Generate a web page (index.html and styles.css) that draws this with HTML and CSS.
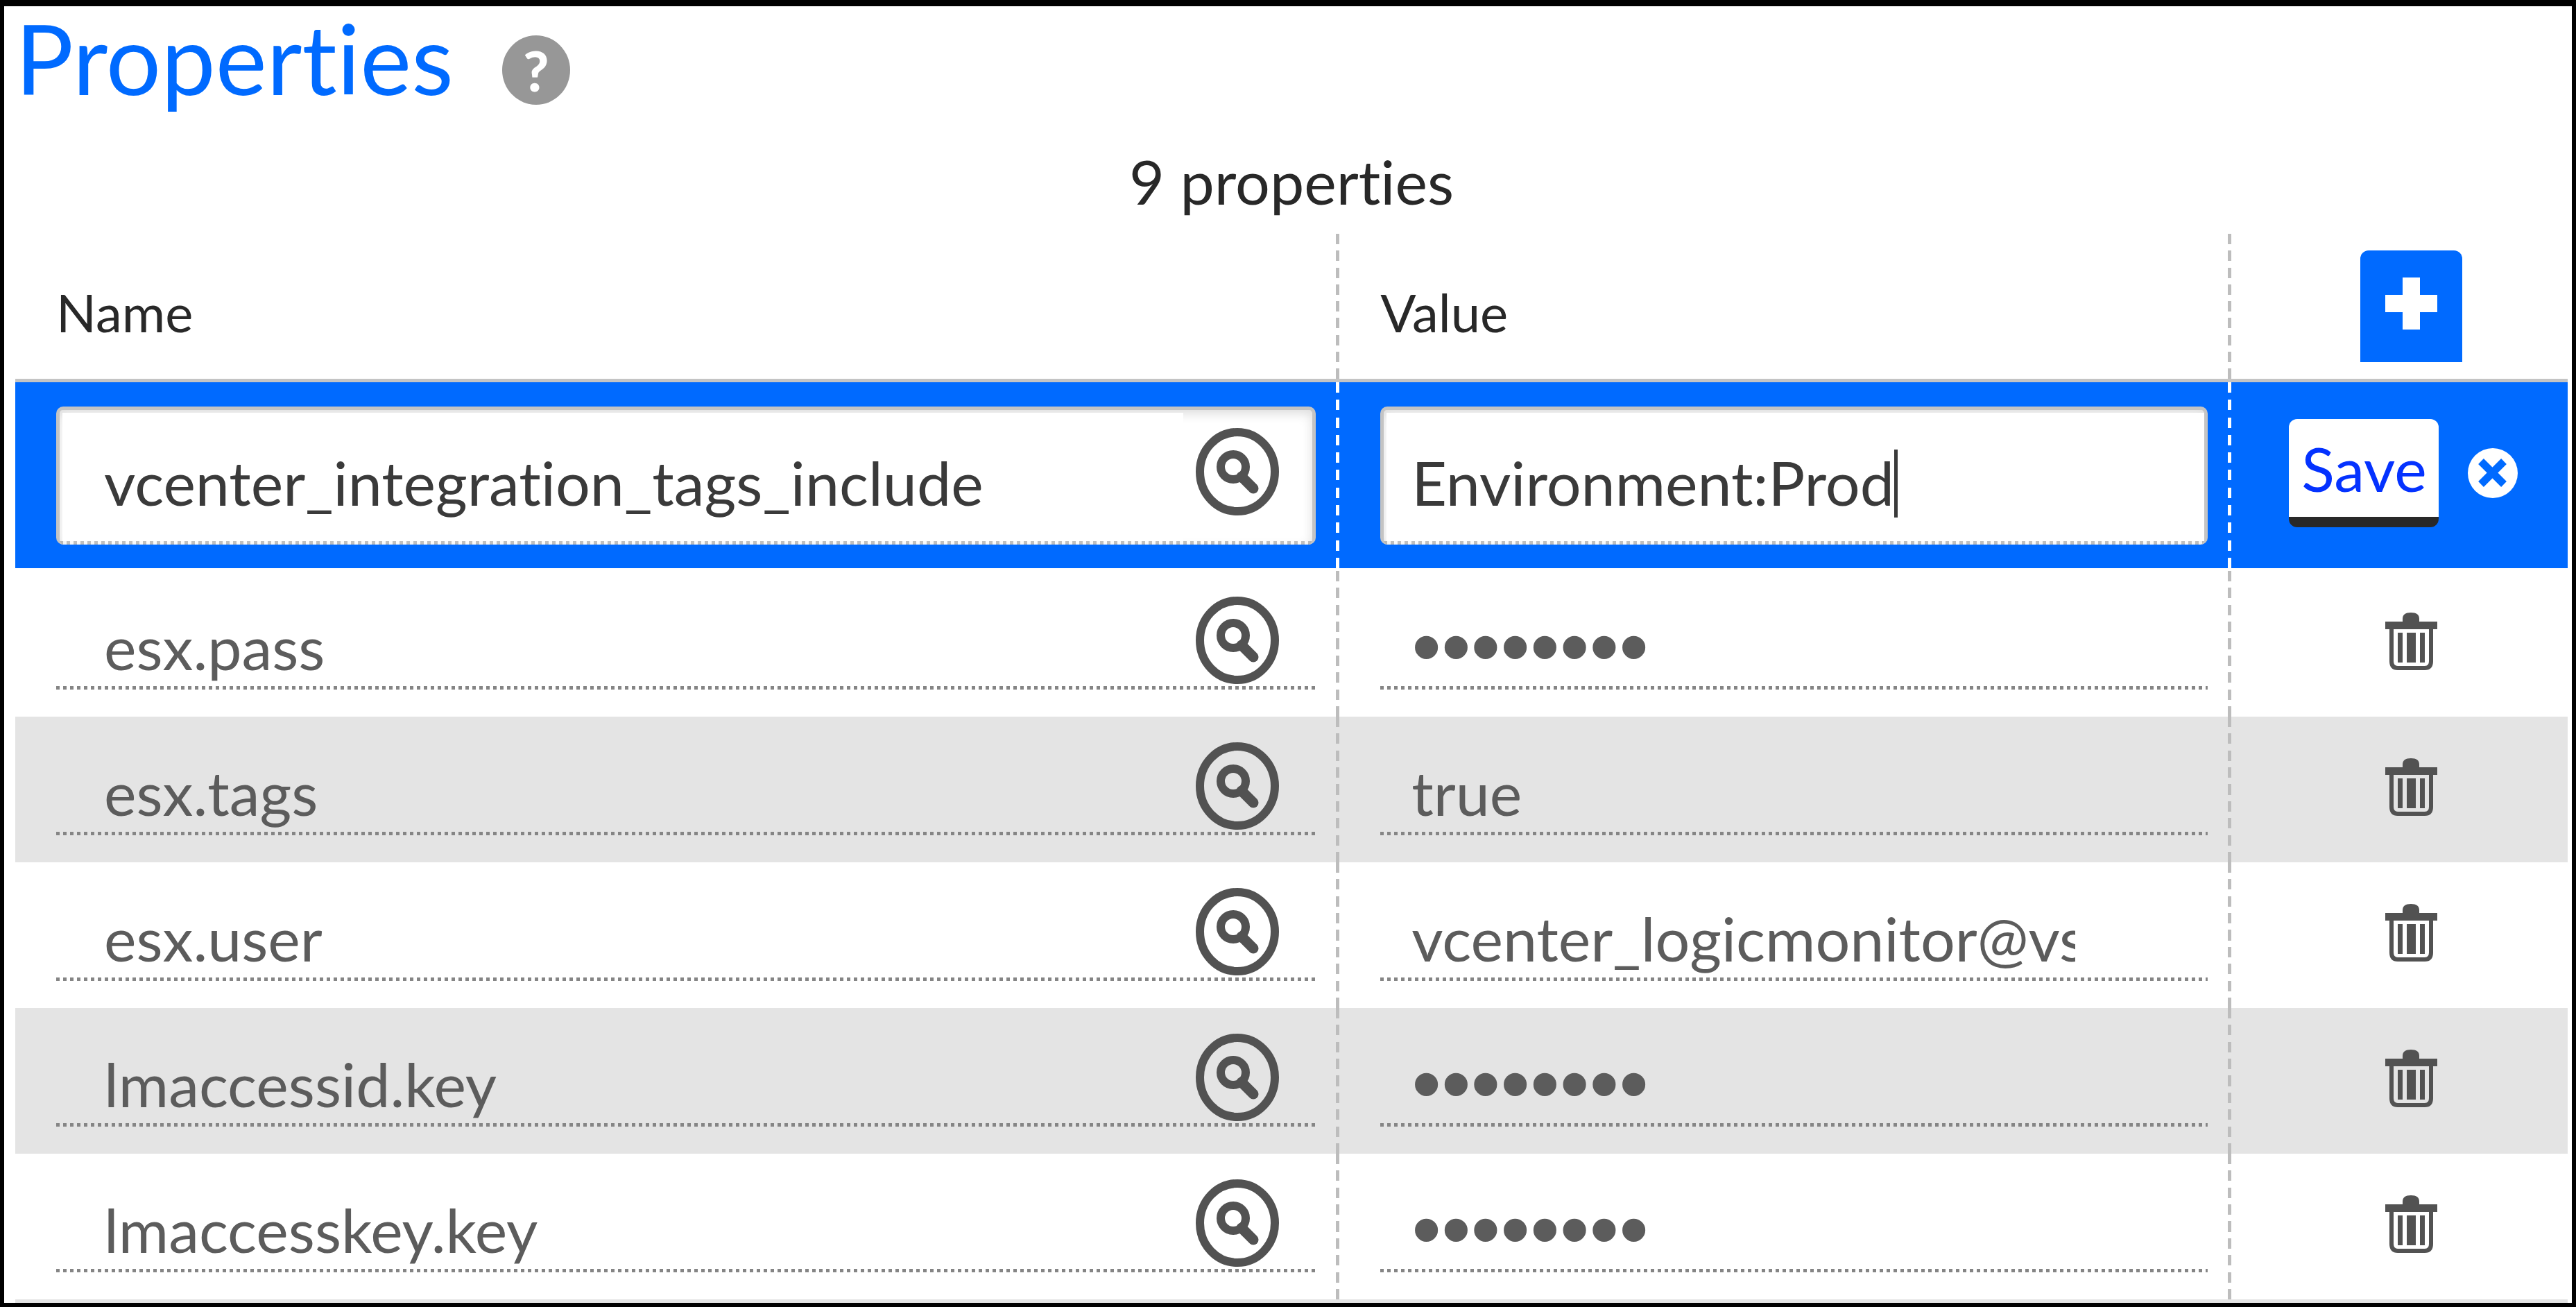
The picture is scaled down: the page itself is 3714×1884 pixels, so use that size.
FILE: index.html
```html
<!DOCTYPE html>
<html lang="en">
<head>
<meta charset="utf-8">
<title>Properties</title>
<link rel="stylesheet" href="styles.css">
</head>
<body>
<svg class="sprite" aria-hidden="true">
  <symbol id="search" viewBox="0 0 120 126">
    <ellipse cx="60" cy="63" rx="54" ry="57" fill="none" stroke="currentColor" stroke-width="12"/>
    <circle cx="54" cy="56" r="18" fill="none" stroke="currentColor" stroke-width="12"/>
    <path d="M66 70 83 87" stroke="currentColor" stroke-width="15" stroke-linecap="round"/>
  </symbol>
  <symbol id="trash" viewBox="0 0 75 83">
    <path d="M25 13V9q0-9 12-9t12 9v4h26v11H0V13z" fill="currentColor"/>
    <path d="M9 22V70q0 10 9 10H57q9 0 9-10V22" fill="none" stroke="currentColor" stroke-width="6"/>
    <path d="M18 29h7v43h-7zM31 29h13v43H31zM50 29h7v43h-7z" fill="currentColor"/>
  </symbol>
</svg>
<main class="panel">
  <header class="panel-head">
    <h1 class="title">Properties</h1>
    <button class="help" type="button" aria-label="Help">?</button>
  </header>
  <p class="count">9 properties</p>
  <table class="props">
    <colgroup><col class="col-name"><col class="col-value"><col class="col-action"></colgroup>
    <thead>
      <tr>
        <th scope="col">Name</th>
        <th scope="col">Value</th>
        <th scope="col" class="action">
          <button class="add" type="button" aria-label="Add property"><svg width="75" height="75" viewBox="0 0 75 75"><path d="M25 0h25v25h25v25H50v25H25V50H0V25h25z" fill="#fff"/></svg></button>
        </th>
      </tr>
    </thead>
    <tbody>
      <tr class="editing">
        <td><div class="field"><input type="text" aria-label="Name" value="vcenter_integration_tags_include"><button class="search" type="button" aria-label="Search"><svg width="120" height="126"><use href="#search"/></svg></button></div></td>
        <td><div class="field value"><input type="text" aria-label="Value" value="Environment:Prod"><span class="caret"></span></div></td>
        <td class="action">
          <div class="actions">
            <button class="save" type="button">Save</button>
            <button class="cancel" type="button" aria-label="Cancel"><svg width="72" height="72" viewBox="0 0 72 72"><circle cx="36" cy="36" r="36" fill="#fff"/><path d="M19 19 52 52M52 19 19 52" stroke="#006aff" stroke-width="11"/></svg></button>
          </div>
        </td>
      </tr>
      <tr class="first">
        <td><div class="field"><input type="text" aria-label="Name" value="esx.pass"><button class="search" type="button" aria-label="Search"><svg width="120" height="126"><use href="#search"/></svg></button></div></td>
        <td><div class="field value"><input type="password" aria-label="Value" value="password"></div></td>
        <td class="action"><button class="delete" type="button" aria-label="Delete"><svg width="75" height="83"><use href="#trash"/></svg></button></td>
      </tr>
      <tr class="shaded">
        <td><div class="field"><input type="text" aria-label="Name" value="esx.tags"><button class="search" type="button" aria-label="Search"><svg width="120" height="126"><use href="#search"/></svg></button></div></td>
        <td><div class="field value"><input type="text" aria-label="Value" value="true"></div></td>
        <td class="action"><button class="delete" type="button" aria-label="Delete"><svg width="75" height="83"><use href="#trash"/></svg></button></td>
      </tr>
      <tr>
        <td><div class="field"><input type="text" aria-label="Name" value="esx.user"><button class="search" type="button" aria-label="Search"><svg width="120" height="126"><use href="#search"/></svg></button></div></td>
        <td><div class="field value"><input type="text" aria-label="Value" value="vcenter_logicmonitor@vsphere.local"></div></td>
        <td class="action"><button class="delete" type="button" aria-label="Delete"><svg width="75" height="83"><use href="#trash"/></svg></button></td>
      </tr>
      <tr class="shaded">
        <td><div class="field"><input type="text" aria-label="Name" value="lmaccessid.key"><button class="search" type="button" aria-label="Search"><svg width="120" height="126"><use href="#search"/></svg></button></div></td>
        <td><div class="field value"><input type="password" aria-label="Value" value="password"></div></td>
        <td class="action"><button class="delete" type="button" aria-label="Delete"><svg width="75" height="83"><use href="#trash"/></svg></button></td>
      </tr>
      <tr>
        <td><div class="field"><input type="text" aria-label="Name" value="lmaccesskey.key"><button class="search" type="button" aria-label="Search"><svg width="120" height="126"><use href="#search"/></svg></button></div></td>
        <td><div class="field value"><input type="password" aria-label="Value" value="password"></div></td>
        <td class="action"><button class="delete" type="button" aria-label="Delete"><svg width="75" height="83"><use href="#trash"/></svg></button></td>
      </tr>
    </tbody>
  </table>
  <div class="more"></div>
</main>
</body>
</html>
```
FILE: styles.css
```css
* { box-sizing: border-box; }

body {
  margin: 0;
  background: #fff;
  color: #282828;
  font-family: Lato, "Liberation Sans", sans-serif;
  font-size: 88px;
  font-variant-ligatures: none;
}

button, input {
  margin: 0;
  padding: 0;
  border: 0;
  background: none;
  color: inherit;
  font: inherit;
  font-variant-ligatures: none;
}

svg { display: block; }

.sprite {
  position: absolute;
  width: 0;
  height: 0;
}

.panel {
  min-height: 100vh;
  padding: 0 6px 0 16px;
  border: 6px solid #000;
  border-top-width: 9px;
}

.panel-head {
  display: flex;
  align-items: center;
  gap: 70px;
  height: 184px;
}

.title {
  margin: 0;
  padding-bottom: 36px;
  color: #006aff;
  font-size: 140px;
  font-weight: 400;
  line-height: 140px;
}

.help {
  width: 98px;
  height: 100px;
  border-radius: 50%;
  background: #979797;
  color: #fff;
  font-size: 80px;
  font-weight: 900;
  line-height: 100px;
}

.count {
  margin: 0;
  padding-bottom: 8px;
  line-height: 136px;
  text-align: center;
}

.props {
  width: 100%;
  border-spacing: 0;
  table-layout: fixed;
}

.col-name { width: 51.88%; }
.col-value { width: 34.94%; }

/* Column separators are dashes that start and end flush with each row. */
th, td {
  --dash: #bdbdbd;
  --gaps: 8;
  height: 210px;
  padding: 0 34px 0 59px;
  background: repeating-linear-gradient(var(--dash) 0 15px, transparent 15px calc((100% - 15px) / var(--gaps))) right / 5px 100% no-repeat;
  background-clip: padding-box;
  vertical-align: top;
}

th {
  height: 214px;
  padding-top: 16px;
  border-bottom: 5px solid #c4c4c4;
  font-size: 76px;
  font-weight: 400;
  text-align: left;
  vertical-align: middle;
}

.action {
  padding: 0 0 0 34px;
  background: none;
}

.add {
  display: block;
  width: 147px;
  height: 161px;
  margin: 0 auto;
  padding-bottom: 8px;
  border-radius: 12px 12px 0 0;
  background: #006aff;
}

.add svg, .delete svg { margin: 0 auto; }

.field {
  display: flex;
  position: relative;
  height: 134px;
  margin-top: 37px;
  padding-bottom: 5px;
  background: repeating-linear-gradient(90deg, #858585 0 5px, transparent 5px 10px) bottom / 100% 5px no-repeat;
}

.field input {
  flex: 1;
  min-width: 0;
  padding: 15px 0 0 69px;
  color: #5c5c5c;
}

.field.value input { padding: 15px 191px 0 45px; }

.field.value input[type="password"] {
  font-family: "Liberation Sans", sans-serif;
  font-size: 122px;
}

.search {
  align-self: flex-end;
  margin: 0 53px 3px 18px;
  color: #525252;
}

.first td { height: 214px; border-top: 4px solid transparent; }
.shaded { background: #e4e4e4; }

.editing { background: #006aff; }

.editing td {
  --dash: #fff;
  --gaps: 10;
  height: 268px;
}

.editing .field {
  height: 199px;
  margin-top: 35px;
  padding: 4px 0 5px 4px;
  border: 5px solid #c4c4c4;
  border-bottom: 0;
  border-radius: 10px;
  background: repeating-linear-gradient(90deg, #c4c4c4 0 5px, transparent 5px 10px) bottom / 100% 5px no-repeat #fff;
  box-shadow: inset 0 5px 16px rgba(0, 0, 0, .14);
}

.editing .field input {
  padding-left: 60px;
  background: #fff;
  color: #3a3a3a;
}

.editing .field.value input { padding-left: 36px; padding-right: 0; }

.editing .search {
  margin-right: 48px;
  margin-bottom: 37px;
}

.caret {
  position: absolute;
  top: 57px;
  left: 736px;
  width: 5px;
  height: 98px;
  background: #3a3a3a;
}

.editing .action {
  padding: 0 0 6px 12px;
  vertical-align: middle;
}

.actions {
  display: flex;
  align-items: center;
  justify-content: center;
  gap: 42px;
}

.save {
  width: 216px;
  height: 156px;
  border-bottom: 15px solid #282828;
  border-radius: 12px;
  background: #fff;
  color: #0432ff;
}

.delete {
  display: block;
  margin: 60px auto 0;
  color: #525252;
}

.more {
  height: 5px;
  background: #e4e4e4;
}
```
